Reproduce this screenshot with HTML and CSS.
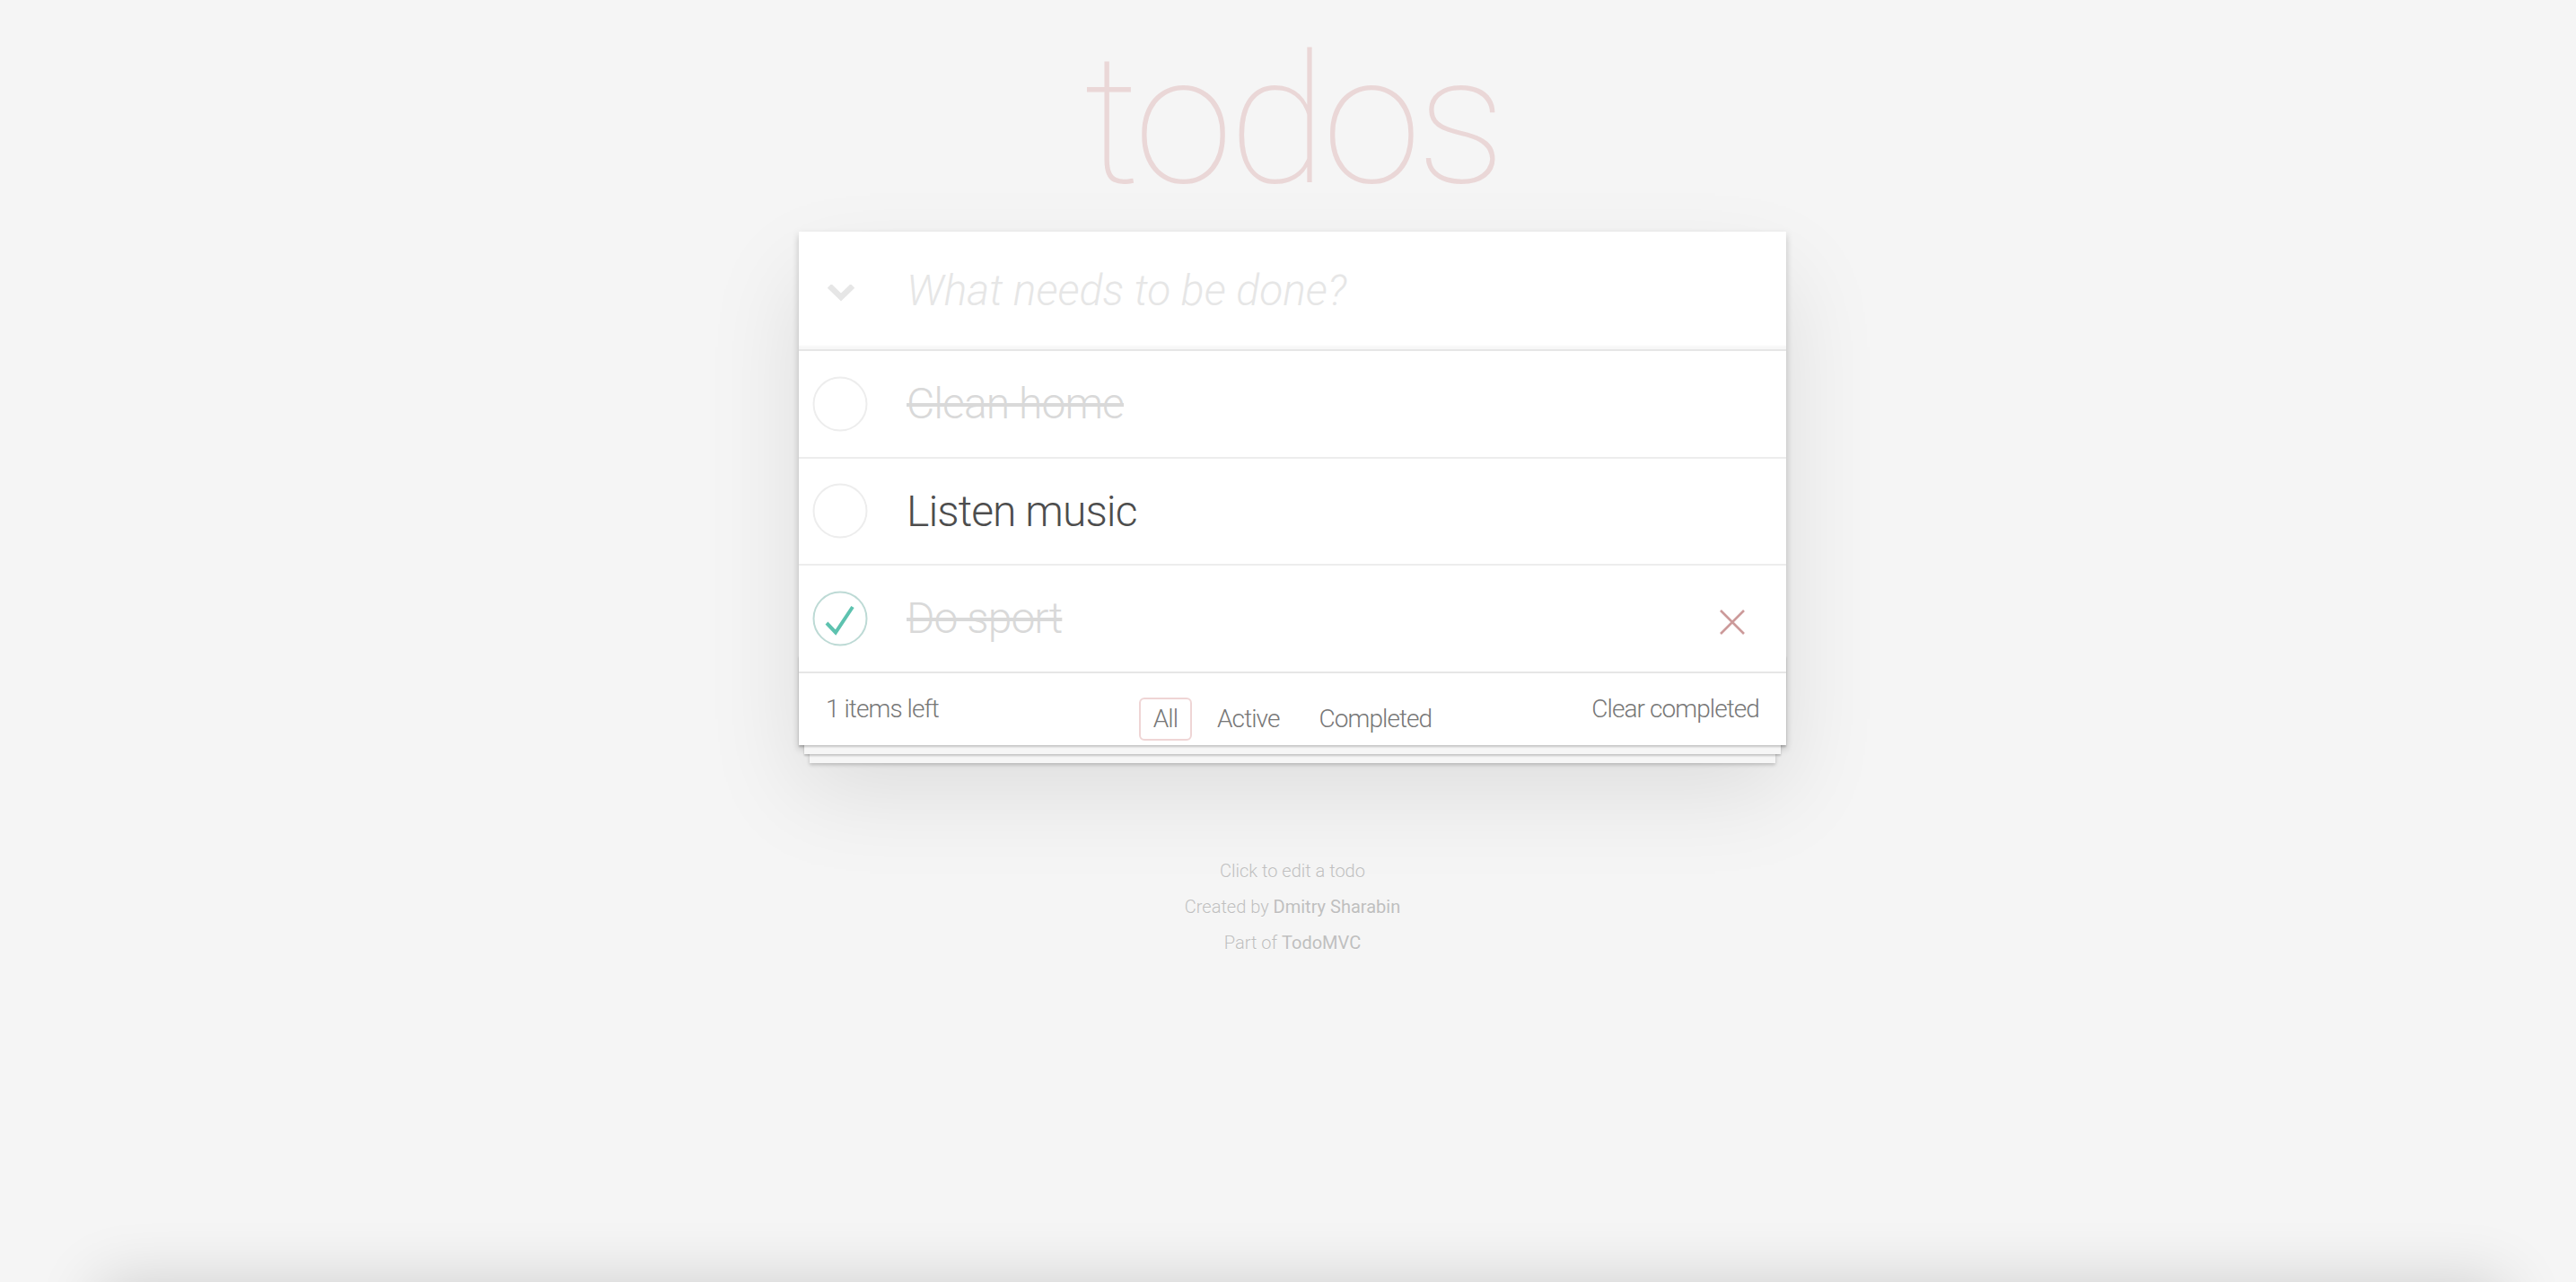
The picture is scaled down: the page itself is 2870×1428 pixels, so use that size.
FILE: index.html
```html
<!DOCTYPE html>
<html lang="en">
<head>
<meta charset="utf-8">
<title>React • TodoMVC</title>
<link rel="stylesheet" href="styles.css">
</head>
<body>
<div class="page">
  <h1 class="title">todos</h1>
  <section class="todoapp">
    <header class="head">
      <span class="toggle-all">
        <svg width="30" height="20" viewBox="0 0 30 20"><polyline points="2,1.5 15,14 28,1.5" fill="none" stroke="#e6e6e6" stroke-width="6.5"/></svg>
      </span>
      <input class="new-todo" placeholder="What needs to be done?">
    </header>
    <ul class="list">
      <li class="item done">
        <span class="check"><svg width="62" height="62" viewBox="0 0 62 62"><circle cx="31" cy="31" r="29.5" fill="none" stroke="#ededed" stroke-width="2"/></svg></span>
        <label class="text">Clean home</label>
      </li>
      <li class="item">
        <span class="check"><svg width="62" height="62" viewBox="0 0 62 62"><circle cx="31" cy="31" r="29.5" fill="none" stroke="#ededed" stroke-width="2"/></svg></span>
        <label class="text">Listen music</label>
      </li>
      <li class="item done">
        <span class="check"><svg width="62" height="62" viewBox="0 0 62 62"><circle cx="31" cy="31" r="29.5" fill="none" stroke="#bddad5" stroke-width="2"/><polyline points="16,36 26,46.5 45,18" fill="none" stroke="#5dc2af" stroke-width="4"/></svg></span>
        <label class="text">Do sport</label>
        <span class="destroy"><svg width="28" height="28" viewBox="0 0 28 28"><path d="M1 1L27 27M27 1L1 27" stroke="#cc9a9a" stroke-width="2.6" fill="none"/></svg></span>
      </li>
    </ul>
    <footer class="foot">
      <span class="count">1 items left</span>
      <ul class="filters">
        <li><a class="selected">All</a></li>
        <li><a>Active</a></li>
        <li><a>Completed</a></li>
      </ul>
      <span class="clear">Clear completed</span>
    </footer>
  </section>
  <footer class="info">
    <p>Click to edit a todo</p>
    <p>Created by <a>Dmitry Sharabin</a></p>
    <p>Part of <a>TodoMVC</a></p>
  </footer>
</div>
<div class="shade"></div>
</body>
</html>
```
FILE: styles.css
```css
html, body {
  margin: 0;
  padding: 0;
}
body {
  background: #f5f5f5;
  color: #4d4d4d;
  font-family: Roboto, "Liberation Sans", Arial, sans-serif;
  font-weight: 300;
  font-size: 28px;
  letter-spacing: -0.033em;
  overflow: hidden;
}
.page {
  width: 1100px;
  margin: 0 auto;
  padding-left: 10px;
}
.title {
  margin: 0 0 23px;
  padding-top: 35px;
  height: 200px;
  font-size: 200px;
  line-height: 200px;
  font-weight: 100;
  letter-spacing: -5px;
  text-align: center;
  color: rgba(175, 47, 47, 0.15);
}
.todoapp {
  background: #fff;
  box-shadow: 0 4px 8px 0 rgba(0, 0, 0, 0.2), 0 50px 100px 0 rgba(0, 0, 0, 0.1);
}
.head {
  display: flex;
  height: 131px;
  box-shadow: inset 0 -4px 2px rgba(0, 0, 0, 0.03);
  border-bottom: 2px solid #e6e6e6;
}
.toggle-all {
  width: 120px;
  flex: none;
  box-sizing: border-box;
  padding-left: 32px;
  padding-top: 6px;
  display: flex;
  align-items: center;
}
.toggle-all svg {
  display: block;
}
.new-todo {
  flex: 1;
  min-width: 0;
  border: 0;
  outline: none;
  background: transparent;
  padding: 0;
  margin: 0;
  font: inherit;
  font-size: 48px;
  letter-spacing: 0;
  color: #4d4d4d;
}
.new-todo::placeholder {
  font-style: italic;
  font-weight: 300;
  color: #e6e6e6;
}
.list {
  list-style: none;
  margin: 0;
  padding: 0;
}
.item {
  display: flex;
  align-items: center;
  border-bottom: 2px solid #ededed;
  font-size: 48px;
}
.item:last-child {
  border-bottom: none;
}
.check {
  width: 120px;
  flex: none;
  box-sizing: border-box;
  padding-left: 15px;
  display: flex;
  align-items: center;
}
.check svg {
  display: block;
}
.text {
  flex: 1;
  padding: 30px 0;
  line-height: 1.2;
  color: #4d4d4d;
}
.done .text {
  color: #d9d9d9;
  text-decoration: line-through;
}
.destroy {
  flex: none;
  margin: 8px 46px 0 0;
  display: flex;
}
.destroy svg {
  display: block;
}
.foot {
  position: relative;
  display: grid;
  grid-template-columns: 1fr auto 1fr;
  align-items: start;
  box-sizing: border-box;
  height: 82px;
  padding: 20px 30px 0;
  border-top: 2px solid #e6e6e6;
  color: #777;
  font-size: 28px;
  line-height: 40px;
}
.foot::before {
  content: "";
  position: absolute;
  right: 0;
  bottom: 0;
  left: 0;
  height: 100px;
  overflow: hidden;
  box-shadow: 0 2px 2px rgba(0, 0, 0, 0.2),
              0 16px 0 -6px #f6f6f6,
              0 18px 2px -6px rgba(0, 0, 0, 0.2),
              0 32px 0 -12px #f6f6f6,
              0 34px 4px -12px rgba(0, 0, 0, 0.2);
  pointer-events: none;
}
.count {
  justify-self: start;
}
.clear {
  justify-self: end;
}
.filters {
  list-style: none;
  margin: 7px 0 0;
  padding: 0;
  display: flex;
}
.filters li {
  display: block;
}
.filters a {
  display: block;
  margin: 0 6px;
  padding: 6px 14px;
  line-height: 32px;
  border: 2px solid transparent;
  border-radius: 6px;
  color: inherit;
}
.filters a.selected {
  border-color: rgba(175, 47, 47, 0.2);
}
.info {
  margin-top: 130px;
  color: #bfbfbf;
  font-size: 20px;
  letter-spacing: 0;
  text-align: center;
  text-shadow: 0 1px 0 rgba(255, 255, 255, 0.5);
}
.info p {
  margin: 20px 0;
  line-height: 1;
}
.info p:first-child {
  margin-top: 0;
}
.info a {
  color: inherit;
  font-weight: 400;
}
.shade {
  position: fixed;
  left: 110px;
  right: 80px;
  top: 100%;
  height: 100px;
  box-shadow: 0 0 70px 0 rgba(0, 0, 0, 0.16);
}
```
